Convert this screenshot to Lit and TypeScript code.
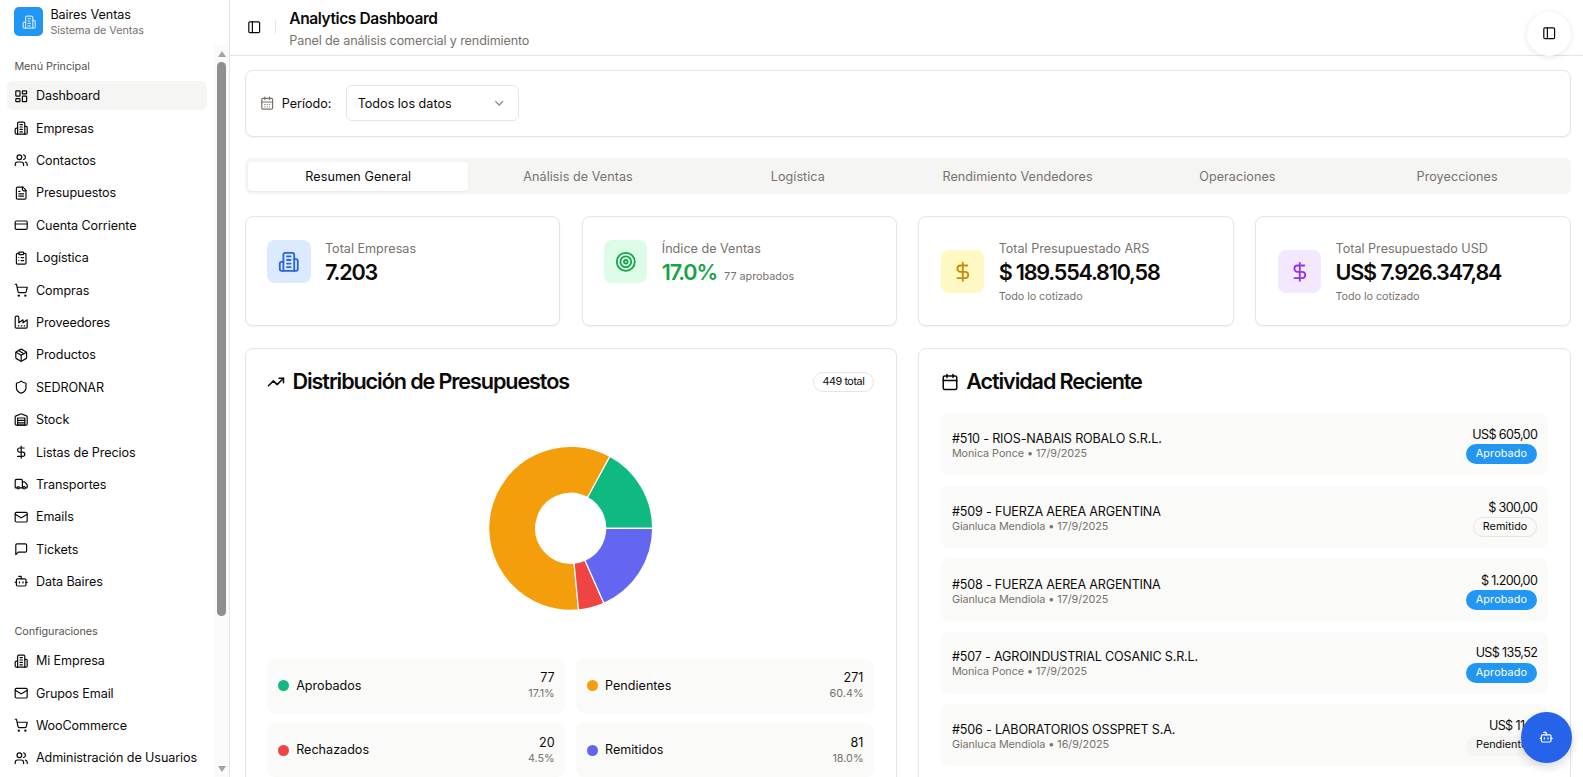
import { LitElement, css, html, svg } from 'lit';
import { customElement } from 'lit/decorators.js';

const ICONS: Record<string, any> = {
  dashboard: svg`<rect x="3" y="3" width="7" height="9" rx="1"/><rect x="14" y="3" width="7" height="5" rx="1"/><rect x="14" y="12" width="7" height="9" rx="1"/><rect x="3" y="16" width="7" height="5" rx="1"/>`,
  building: svg`<path d="M6 22V4a2 2 0 0 1 2-2h8a2 2 0 0 1 2 2v18Z"/><path d="M6 12H4a2 2 0 0 0-2 2v6a2 2 0 0 0 2 2h2"/><path d="M18 9h2a2 2 0 0 1 2 2v9a2 2 0 0 1-2 2h-2"/><path d="M10 6h4"/><path d="M10 10h4"/><path d="M10 14h4"/><path d="M10 18h4"/>`,
  users: svg`<path d="M16 21v-2a4 4 0 0 0-4-4H6a4 4 0 0 0-4 4v2"/><circle cx="9" cy="7" r="4"/><path d="M22 21v-2a4 4 0 0 0-3-3.87"/><path d="M16 3.13a4 4 0 0 1 0 7.75"/>`,
  file: svg`<path d="M15 2H6a2 2 0 0 0-2 2v16a2 2 0 0 0 2 2h12a2 2 0 0 0 2-2V7Z"/><path d="M14 2v4a2 2 0 0 0 2 2h4"/><path d="M10 9H8"/><path d="M16 13H8"/><path d="M16 17H8"/>`,
  card: svg`<rect x="2" y="5" width="20" height="14" rx="2"/><line x1="2" y1="10" x2="22" y2="10"/>`,
  clipboard: svg`<rect x="8" y="2" width="8" height="4" rx="1"/><path d="M16 4h2a2 2 0 0 1 2 2v14a2 2 0 0 1-2 2H6a2 2 0 0 1-2-2V6a2 2 0 0 1 2-2h2"/><path d="M12 11h4"/><path d="M12 16h4"/><path d="M8 11h.01"/><path d="M8 16h.01"/>`,
  cart: svg`<circle cx="8" cy="21" r="1"/><circle cx="19" cy="21" r="1"/><path d="M2.05 2.05h2l2.66 12.42a2 2 0 0 0 2 1.58h9.78a2 2 0 0 0 1.95-1.57l1.65-7.43H5.12"/>`,
  factory: svg`<path d="M2 20a2 2 0 0 0 2 2h16a2 2 0 0 0 2-2V8l-7 5V8l-7 5V4a2 2 0 0 0-2-2H4a2 2 0 0 0-2 2Z"/><path d="M17 18h1"/><path d="M12 18h1"/><path d="M7 18h1"/>`,
  box: svg`<path d="M11 21.73a2 2 0 0 0 2 0l7-4A2 2 0 0 0 21 16V8a2 2 0 0 0-1-1.73l-7-4a2 2 0 0 0-2 0l-7 4A2 2 0 0 0 3 8v8a2 2 0 0 0 1 1.73z"/><path d="M12 22V12"/><polyline points="3.29 7 12 12 20.71 7"/><path d="m7.5 4.27 9 5.15"/>`,
  shield: svg`<path d="M20 13c0 5-3.5 7.5-7.66 8.95a1 1 0 0 1-.67-.01C7.5 20.5 4 18 4 13V6a1 1 0 0 1 1-1c2 0 4.5-1.2 6.24-2.72a1.17 1.17 0 0 1 1.52 0C14.51 3.81 17 5 19 5a1 1 0 0 1 1 1z"/>`,
  warehouse: svg`<path d="M22 8.35V20a2 2 0 0 1-2 2H4a2 2 0 0 1-2-2V8.35A2 2 0 0 1 3.26 6.5l8-3.2a2 2 0 0 1 1.48 0l8 3.2A2 2 0 0 1 22 8.35Z"/><path d="M6 18h12"/><path d="M6 14h12"/><rect x="6" y="10" width="12" height="12"/>`,
  dollar: svg`<line x1="12" y1="2" x2="12" y2="22"/><path d="M17 5H9.5a3.5 3.5 0 0 0 0 7h5a3.5 3.5 0 0 1 0 7H6"/>`,
  truck: svg`<path d="M14 18V6a2 2 0 0 0-2-2H4a2 2 0 0 0-2 2v11a1 1 0 0 0 1 1h2"/><path d="M15 18H9"/><path d="M19 18h2a1 1 0 0 0 1-1v-3.65a1 1 0 0 0-.22-.624l-3.48-4.35A1 1 0 0 0 17.52 8H14"/><circle cx="17" cy="18" r="2"/><circle cx="7" cy="18" r="2"/>`,
  mail: svg`<rect x="2" y="4" width="20" height="16" rx="2"/><path d="m22 7-8.97 5.7a1.94 1.94 0 0 1-2.06 0L2 7"/>`,
  message: svg`<path d="M21 15a2 2 0 0 1-2 2H7l-4 4V5a2 2 0 0 1 2-2h14a2 2 0 0 1 2 2z"/>`,
  bot: svg`<path d="M12 8V4H8"/><rect x="4" y="8" width="16" height="12" rx="2"/><path d="M2 14h2"/><path d="M20 14h2"/><path d="M15 13v2"/><path d="M9 13v2"/>`,
  panel: svg`<rect x="3" y="3" width="18" height="18" rx="2"/><path d="M9 3v18"/>`,
  calendar: svg`<path d="M8 2v4"/><path d="M16 2v4"/><rect x="3" y="4" width="18" height="18" rx="2"/><path d="M3 10h18"/>`,
  calendarDays: svg`<path d="M8 2v4"/><path d="M16 2v4"/><rect x="3" y="4" width="18" height="18" rx="2"/><path d="M3 10h18"/><path d="M8 14h.01"/><path d="M12 14h.01"/><path d="M16 14h.01"/><path d="M8 18h.01"/><path d="M12 18h.01"/><path d="M16 18h.01"/>`,
  chevron: svg`<path d="m6 9 6 6 6-6"/>`,
  target: svg`<circle cx="12" cy="12" r="10"/><circle cx="12" cy="12" r="6"/><circle cx="12" cy="12" r="2"/>`,
  trending: svg`<polyline points="22 7 13.5 15.5 8.5 10.5 2 17"/><polyline points="16 7 22 7 22 13"/>`,
};

const icon = (name: string, cls = '') =>
  html`<svg class="icon ${cls}" viewBox="0 0 24 24" fill="none" stroke="currentColor" stroke-width="2" stroke-linecap="round" stroke-linejoin="round">${ICONS[name]}</svg>`;

const MENU = [
  ['dashboard', 'Dashboard'], ['building', 'Empresas'], ['users', 'Contactos'], ['file', 'Presupuestos'],
  ['card', 'Cuenta Corriente'], ['clipboard', 'Logística'], ['cart', 'Compras'], ['factory', 'Proveedores'],
  ['box', 'Productos'], ['shield', 'SEDRONAR'], ['warehouse', 'Stock'], ['dollar', 'Listas de Precios'],
  ['truck', 'Transportes'], ['mail', 'Emails'], ['message', 'Tickets'], ['bot', 'Data Baires'],
];
const CONFIG = [
  ['building', 'Mi Empresa'], ['mail', 'Grupos Email'], ['cart', 'WooCommerce'], ['users', 'Administración de Usuarios'],
];
const TABS = ['Resumen General', 'Análisis de Ventas', 'Logística', 'Rendimiento Vendedores', 'Operaciones', 'Proyecciones'];

const STATS = [
  { icon: 'building', tone: 'blue', label: 'Total Empresas', value: '7.203' },
  { icon: 'target', tone: 'green', label: 'Índice de Ventas', value: '17.0%', extra: '77 aprobados' },
  { icon: 'dollar', tone: 'yellow', label: 'Total Presupuestado ARS', value: '$ 189.554.810,58', note: 'Todo lo cotizado' },
  { icon: 'dollar', tone: 'purple', label: 'Total Presupuestado USD', value: 'US$ 7.926.347,84', note: 'Todo lo cotizado' },
];

// deg = sweep of the slice as measured on the chart
const SLICES = [
  { label: 'Aprobados', count: 77, pct: '17.1%', color: '#10b981', deg: 61.5 },
  { label: 'Pendientes', count: 271, pct: '60.4%', color: '#f59e0b', deg: 214 },
  { label: 'Rechazados', count: 20, pct: '4.5%', color: '#ef4444', deg: 18.4 },
  { label: 'Remitidos', count: 81, pct: '18.0%', color: '#6366f1', deg: 66.1 },
];

const ACTIVITY = [
  { title: '#510 - RIOS-NABAIS ROBALO S.R.L.', sub: 'Monica Ponce • 17/9/2025', amount: 'US$ 605,00', status: 'Aprobado' },
  { title: '#509 - FUERZA AEREA ARGENTINA', sub: 'Gianluca Mendiola • 17/9/2025', amount: '$ 300,00', status: 'Remitido' },
  { title: '#508 - FUERZA AEREA ARGENTINA', sub: 'Gianluca Mendiola • 17/9/2025', amount: '$ 1.200,00', status: 'Aprobado' },
  { title: '#507 - AGROINDUSTRIAL COSANIC S.R.L.', sub: 'Monica Ponce • 17/9/2025', amount: 'US$ 135,52', status: 'Aprobado' },
  { title: '#506 - LABORATORIOS OSSPRET S.A.', sub: 'Gianluca Mendiola • 16/9/2025', amount: 'US$ 11,17', status: 'Pendiente' },
  { title: '#505 - LABORATORIOS OSSPRET S.A.', sub: 'Gianluca Mendiola • 16/9/2025', amount: 'US$ 11,17', status: 'Pendiente' },
];

// Donut segment, angles counter-clockwise from 3 o'clock like recharts
function slicePath(cx: number, cy: number, r0: number, r1: number, a0: number, a1: number) {
  const pt = (r: number, a: number) => {
    const t = (a * Math.PI) / 180;
    return `${(cx + r * Math.cos(t)).toFixed(2)} ${(cy - r * Math.sin(t)).toFixed(2)}`;
  };
  const large = a1 - a0 > 180 ? 1 : 0;
  return `M${pt(r1, a0)} A${r1} ${r1} 0 ${large} 0 ${pt(r1, a1)} L${pt(r0, a1)} A${r0} ${r0} 0 ${large} 1 ${pt(r0, a0)} Z`;
}

const badgeClass: Record<string, string> = { Aprobado: 'primary', Remitido: 'outline', Pendiente: 'secondary' };

@customElement('app-root')
export class AppRoot extends LitElement {
  static styles = css`
    :host {
      display: flex;
      height: 100vh;
      overflow: hidden;
      position: relative;
      background: #fff;
      color: #0c0a09;
      font-family: Inter, "Noto Sans", sans-serif;
      font-size: 12.6px;
      line-height: 18px;
    }
    * { box-sizing: border-box; }
    .icon { width: 14.4px; height: 14.4px; flex: none; display: block; }

    /* sidebar */
    .sidebar {
      width: 230.4px;
      flex: none;
      border-right: 1px solid #e7e5e4;
      display: flex;
      flex-direction: column;
      height: 100%;
    }
    .brand {
      display: flex;
      align-items: center;
      gap: 7.2px;
      height: 45.4px;
      padding: 0 14.4px;
      flex: none;
    }
    .logo {
      width: 28.8px;
      height: 28.8px;
      margin-bottom: 2px;
      border-radius: 5px;
      background: #2196f3;
      color: #fff;
      display: flex;
      align-items: center;
      justify-content: center;
    }
    .logo .icon { opacity: .75; }
    .brand-name { line-height: 16px; letter-spacing: -.05px; }
    .brand-sub { font-size: 10.8px; line-height: 15px; color: #78716c; letter-spacing: -.05px; }
    .side-body { flex: 1; min-height: 0; display: flex; }
    .nav { flex: 1; min-width: 0; overflow: hidden; }
    .scrollbar { width: 15px; flex: none; background: #fafafa; display: flex; flex-direction: column; }
    .arrow { height: 17px; flex: none; display: flex; align-items: center; justify-content: center; }
    .arrow::before { content: ""; border-left: 4.5px solid transparent; border-right: 4.5px solid transparent; }
    .arrow.up::before { border-bottom: 6px solid #a3a3a3; }
    .arrow.down::before { border-top: 6px solid #a3a3a3; }
    .thumb { height: 553.6px; flex: none; margin: 0 3px; border-radius: 5px; background: #8f8f8f; }
    .track { flex: 1; }
    .group { padding: 7.2px; }
    .group + .group { margin-top: 7.2px; }
    .group-label {
      height: 28.8px;
      padding: 0 7.2px;
      display: flex;
      align-items: center;
      font-size: 10.8px;
      color: #57534e;
      letter-spacing: -.05px;
    }
    .menu { display: flex; flex-direction: column; gap: 3.6px; }
    .item {
      height: 28.8px;
      display: flex;
      align-items: center;
      gap: 7.2px;
      padding: 0 7.2px;
      border-radius: 6px;
      white-space: nowrap;
      letter-spacing: -.1px;
    }
    .item span { padding-top: 1px; }
    .item.active { background: #f5f5f4; }

    /* main column */
    .main { flex: 1; min-width: 0; display: flex; flex-direction: column; }
    .topbar {
      height: 55.5px;
      flex: none;
      border-bottom: 1px solid #e7e5e4;
      display: flex;
      align-items: center;
      padding-left: 17px;
    }
    .divider { width: 1px; height: 14px; background: #e7e5e4; margin: 0 13px 0 13.5px; }
    .page-head { padding-top: 3px; }
    .page-title { font-size: 15.5px; line-height: 21px; font-weight: 600; letter-spacing: -.4px; }
    .page-sub { font-size: 12.6px; line-height: 18px; margin-top: 3px; color: #78716c; letter-spacing: -.13px; }
    .content {
      flex: 1;
      min-height: 0;
      overflow: hidden;
      padding: 14.4px 12.4px 0 14.4px;
      display: flex;
      flex-direction: column;
      gap: 21.6px;
    }
    .card {
      background: #fff;
      border: 1px solid #e7e5e4;
      border-radius: 8px;
      box-shadow: 0 1px 2px rgba(0, 0, 0, .05);
    }

    .filter { display: flex; align-items: center; gap: 7.2px; padding: 14.4px; flex: none; }
    .filter .icon { color: #78716c; }
    .filter span { padding-top: 1px; }
    .select {
      width: 172.8px;
      height: 36px;
      margin-left: 7.2px;
      padding: 0 10.8px;
      border: 1px solid #e7e5e4;
      border-radius: 6px;
      display: flex;
      align-items: center;
      justify-content: space-between;
    }
    .select .icon { opacity: .5; color: #0c0a09; }

    .tabs {
      height: 36px;
      flex: none;
      padding: 3.6px;
      background: #f5f5f4;
      border-radius: 6px;
      display: grid;
      grid-template-columns: repeat(6, 1fr);
      color: #78716c;
    }
    .tab { display: flex; align-items: center; justify-content: center; padding-top: 2px; border-radius: 4px; letter-spacing: .05px; }
    .tab.active { background: #fff; color: #0c0a09; box-shadow: 0 1px 2px rgba(0, 0, 0, .05); }

    .stats { display: grid; grid-template-columns: repeat(4, 1fr); gap: 21.6px; flex: none; }
    .stat { padding: 21.6px; display: flex; align-items: flex-start; height: 110.4px; }
    .stat-row { display: flex; align-items: center; gap: 14.4px; }
    .stat-icon {
      width: 43.2px;
      height: 43.2px;
      border-radius: 8px;
      display: flex;
      align-items: center;
      justify-content: center;
      flex: none;
    }
    .stat-icon .icon { width: 21.6px; height: 21.6px; }
    .stat-icon.blue { background: #dbeafe; color: #2563eb; }
    .stat-icon.green { background: #dcfce7; color: #16a34a; }
    .stat-icon.yellow { background: #fef9c3; color: #ca8a04; }
    .stat-icon.purple { background: #f3e8ff; color: #9333ea; }
    .stat-label { color: #78716c; padding-top: 2px; }
    .stat-value-row { display: flex; align-items: baseline; gap: 7.2px; margin-bottom: -2px; }
    .stat-value { font-size: 21.6px; line-height: 28.8px; font-weight: 600; letter-spacing: -1.2px; }
    .stat-value.green { color: #16a34a; }
    .stat-extra { font-size: 10.8px; color: #78716c; }
    .stat-note { font-size: 10.8px; line-height: 14.4px; margin-top: 4.6px; color: #78716c; letter-spacing: -.05px; }

    .panels { display: grid; grid-template-columns: 1fr 1fr; gap: 21.6px; flex: none; margin-top: .6px; }
    .panel { padding: 21.6px; height: 640px; }
    .panel-head { display: flex; align-items: center; justify-content: space-between; height: 21.6px; margin-bottom: 20.6px; }
    .panel-title {
      display: flex;
      align-items: center;
      gap: 7.2px;
      font-size: 21.6px;
      line-height: 21.6px;
      font-weight: 600;
      letter-spacing: -1.1px;
    }
    .panel-title .icon { width: 18px; height: 18px; }
    .badge {
      display: inline-flex;
      align-items: center;
      height: 20px;
      padding: 0 9px;
      border-radius: 999px;
      border: 1px solid transparent;
      font-size: 10.8px;
      line-height: 14.4px;
    }
    .badge.primary { background: #2196f3; color: #fff; letter-spacing: .15px; }
    .badge.secondary { background: #f5f5f4; }
    .badge.outline { border-color: #e7e5e4; }
    .badge.count { letter-spacing: -.45px; }

    .chart { height: 230.4px; display: flex; justify-content: center; margin-bottom: 15px; }
    .chart svg { width: 200px; height: 230.4px; display: block; }
    .legend { display: grid; grid-template-columns: 1fr 1fr; gap: 10.8px; }
    .legend-item {
      height: 54px;
      padding: 0 10.8px;
      background: #fafaf9;
      border-radius: 8px;
      display: flex;
      align-items: center;
      justify-content: space-between;
    }
    .legend-name { display: flex; align-items: center; gap: 7.2px; }
    .dot { width: 10.8px; height: 10.8px; border-radius: 50%; }
    .legend-nums { text-align: right; }
    .legend-pct { font-size: 10.8px; line-height: 14.4px; color: #78716c; }

    .rows { display: flex; flex-direction: column; gap: 10.8px; }
    .row {
      padding: 10.8px;
      background: #fafaf9;
      border-radius: 8px;
      display: flex;
      align-items: center;
      justify-content: space-between;
    }
    .row-left { padding-top: 3px; }
    .row-title { line-height: 17px; letter-spacing: -.18px; }
    .row-sub { font-size: 10.8px; line-height: 14.4px; color: #78716c; letter-spacing: -.05px; }
    .row-right { display: flex; flex-direction: column; align-items: flex-end; gap: .4px; }
    .row-amount { padding-top: 1px; line-height: 19px; letter-spacing: -.65px; }

    /* floating controls */
    .toggle {
      position: absolute;
      top: 11.5px;
      right: 12px;
      width: 44px;
      height: 44px;
      border-radius: 50%;
      background: #fff;
      box-shadow: 0 1px 6px rgba(0, 0, 0, .1);
      display: flex;
      align-items: center;
      justify-content: center;
    }
    .fab {
      position: absolute;
      right: 11.5px;
      bottom: 14.5px;
      width: 50.4px;
      height: 50.4px;
      border-radius: 50%;
      background: #2563eb;
      color: #fff;
      box-shadow: 0 4px 10px rgba(0, 0, 0, .15);
      display: flex;
      align-items: center;
      justify-content: center;
    }
  `;

  renderItem([ic, label]: string[], active = false) {
    return html`<div class="item ${active ? 'active' : ''}">${icon(ic)}<span>${label}</span></div>`;
  }

  renderDonut() {
    let a = 0;
    return html`<svg viewBox="0 0 200 230.4">
      ${SLICES.map(s => {
        const d = slicePath(99.7, 115.3, 35, 82, a, a + s.deg);
        a += s.deg;
        return svg`<path d=${d} fill=${s.color} stroke="#fff" stroke-width="1.2"></path>`;
      })}
    </svg>`;
  }

  render() {
    return html`
      <aside class="sidebar">
        <div class="brand">
          <div class="logo">${icon('building')}</div>
          <div>
            <div class="brand-name">Baires Ventas</div>
            <div class="brand-sub">Sistema de Ventas</div>
          </div>
        </div>
        <div class="side-body">
          <div class="nav">
            <div class="group">
              <div class="group-label">Menú Principal</div>
              <div class="menu">${MENU.map((m, i) => this.renderItem(m, i === 0))}</div>
            </div>
            <div class="group">
              <div class="group-label">Configuraciones</div>
              <div class="menu">${CONFIG.map(m => this.renderItem(m))}</div>
            </div>
          </div>
          <div class="scrollbar">
            <div class="arrow up"></div>
            <div class="thumb"></div>
            <div class="track"></div>
            <div class="arrow down"></div>
          </div>
        </div>
      </aside>

      <div class="main">
        <header class="topbar">
          ${icon('panel')}
          <div class="divider"></div>
          <div class="page-head">
            <div class="page-title">Analytics Dashboard</div>
            <div class="page-sub">Panel de análisis comercial y rendimiento</div>
          </div>
        </header>

        <div class="content">
          <div class="card filter">
            ${icon('calendarDays')}
            <span>Período:</span>
            <div class="select"><span>Todos los datos</span>${icon('chevron')}</div>
          </div>

          <div class="tabs">
            ${TABS.map((t, i) => html`<div class="tab ${i === 0 ? 'active' : ''}">${t}</div>`)}
          </div>

          <div class="stats">
            ${STATS.map(s => html`
              <div class="card stat">
                <div class="stat-row">
                  <div class="stat-icon ${s.tone}">${icon(s.icon)}</div>
                  <div>
                    <div class="stat-label">${s.label}</div>
                    <div class="stat-value-row">
                      <span class="stat-value ${s.extra ? 'green' : ''}">${s.value}</span>
                      ${s.extra ? html`<span class="stat-extra">${s.extra}</span>` : null}
                    </div>
                    ${s.note ? html`<div class="stat-note">${s.note}</div>` : null}
                  </div>
                </div>
              </div>
            `)}
          </div>

          <div class="panels">
            <div class="card panel">
              <div class="panel-head">
                <div class="panel-title">${icon('trending')}Distribución de Presupuestos</div>
                <span class="badge outline count">449 total</span>
              </div>
              <div class="chart">${this.renderDonut()}</div>
              <div class="legend">
                ${SLICES.map(s => html`
                  <div class="legend-item">
                    <div class="legend-name"><span class="dot" style="background:${s.color}"></span>${s.label}</div>
                    <div class="legend-nums">
                      <div>${s.count}</div>
                      <div class="legend-pct">${s.pct}</div>
                    </div>
                  </div>
                `)}
              </div>
            </div>

            <div class="card panel">
              <div class="panel-head">
                <div class="panel-title">${icon('calendar')}Actividad Reciente</div>
              </div>
              <div class="rows">
                ${ACTIVITY.map(r => html`
                  <div class="row">
                    <div class="row-left">
                      <div class="row-title">${r.title}</div>
                      <div class="row-sub">${r.sub}</div>
                    </div>
                    <div class="row-right">
                      <div class="row-amount">${r.amount}</div>
                      <span class="badge ${badgeClass[r.status]}">${r.status}</span>
                    </div>
                  </div>
                `)}
              </div>
            </div>
          </div>
        </div>
      </div>

      <div class="toggle">${icon('panel')}</div>
      <div class="fab">${icon('bot')}</div>
    `;
  }
}
